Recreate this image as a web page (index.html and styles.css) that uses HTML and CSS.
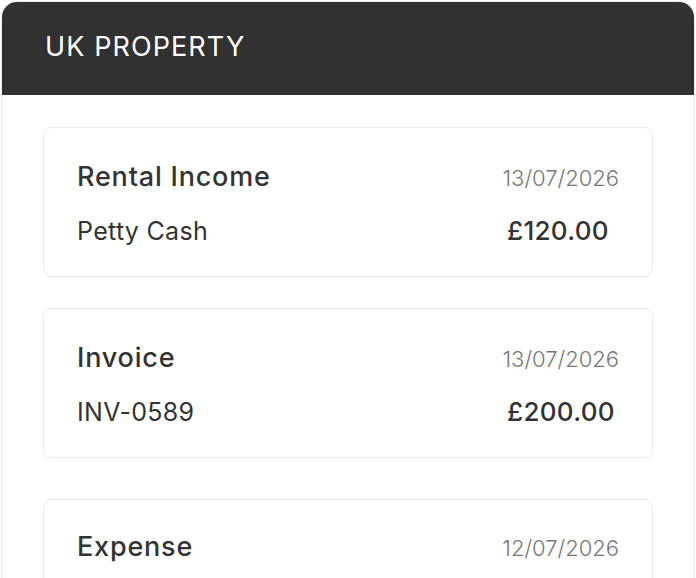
FILE: index.html
```html
<!DOCTYPE html>
<html lang="en">
<head>
  <meta charset="UTF-8" />
  <title>UK Property</title>
  <meta name="viewport" content="width=device-width, initial-scale=1.0" />
  <link rel="stylesheet" href="styles.css">
</head>
<body>
  <div class="panel">
    <div class="panel-header">UK PROPERTY</div>
    <div class="panel-body">
      <div class="entry">
        <div class="entry-row">
          <span class="entry-title">Rental Income</span>
          <span class="entry-date">13/07/2026</span>
        </div>
        <div class="entry-row">
          <span class="entry-ref">Petty Cash</span>
          <span class="entry-amount">£120.00</span>
        </div>
      </div>
      <div class="entry">
        <div class="entry-row">
          <span class="entry-title">Invoice</span>
          <span class="entry-date">13/07/2026</span>
        </div>
        <div class="entry-row">
          <span class="entry-ref">INV-0589</span>
          <span class="entry-amount">£200.00</span>
        </div>
      </div>
      <div class="entry entry-next">
        <div class="entry-row">
          <span class="entry-title">Expense</span>
          <span class="entry-date">12/07/2026</span>
        </div>
      </div>
    </div>
  </div>
</body>
</html>
```

FILE: styles.css
```css
:root {
  --header: #313131;
  --line: #ececec;
  --text: #333333;
  --muted: #777777;
}

body {
  font-family: Inter, 'Noto Sans', sans-serif;
  background: #ffffff;
  margin: 0;
  padding: 1px 1px 0 1px;
  color: var(--text);
  height: 577px;
  overflow: hidden;
}

.panel {
  border: 1px solid var(--line);
  border-bottom: none;
  border-radius: 16px 16px 0 0;
  overflow: hidden;
  height: 100%;
}

.panel-header {
  background: var(--header);
  color: #ffffff;
  height: 93px;
  padding: 0 0 4px 43px;
  box-sizing: border-box;
  display: flex;
  align-items: center;
  font-size: 27px;
  letter-spacing: 1.1px;
}

.panel-body {
  padding: 32px 41px 0 41px;
}

.entry {
  border: 1px solid var(--line);
  border-radius: 8px;
  height: 146px;
  padding: 2px 33px 0 33px;
  display: flex;
  flex-direction: column;
  justify-content: center;
  gap: 22px;
  margin-bottom: 31px;
}

.entry-next {
  margin-top: 41px;
  justify-content: flex-start;
  padding-top: 30px;
}

.entry-row {
  display: flex;
  justify-content: space-between;
  align-items: baseline;
}

.entry-title {
  font-size: 27px;
  font-weight: 500;
  letter-spacing: 0.8px;
}

.entry-date {
  font-size: 22px;
  font-weight: 300;
  color: var(--muted);
  width: 118px;
  text-align: right;
}

.entry-ref {
  font-size: 25px;
  letter-spacing: 0.3px;
}

.entry-amount {
  font-size: 26px;
  font-weight: 500;
  letter-spacing: 0.3px;
  width: 112px;
}
```
